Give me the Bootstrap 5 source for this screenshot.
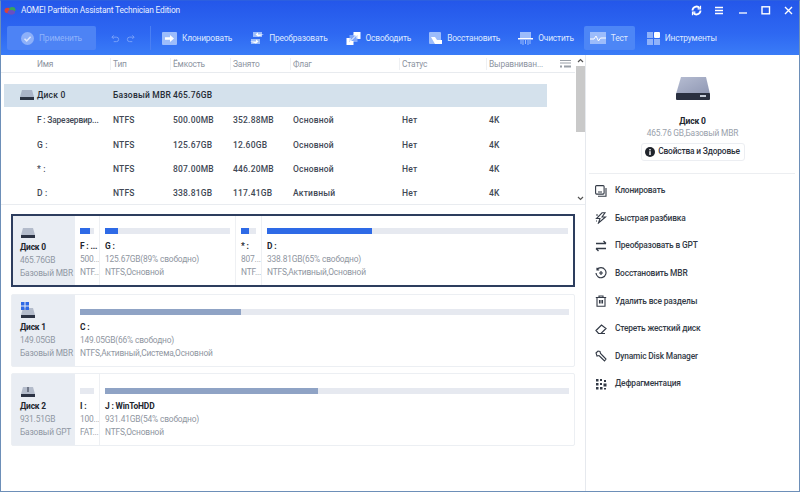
<!DOCTYPE html>
<html lang="ru">
<head>
<meta charset="utf-8">
<title>AOMEI Partition Assistant</title>
<link href="https://cdn.jsdelivr.net/npm/bootstrap@5.3.0/dist/css/bootstrap.min.css" rel="stylesheet">
<style>
html,body{height:100%;overflow:hidden;background:#fff}
body{font-family:Roboto,"Liberation Sans",sans-serif;font-size:8.400px;letter-spacing:-.17px;color:#3c4350}
.win{width:800px;height:492px;border:1px solid #6d8fb8;border-top-color:#2c5fe0;display:flex;flex-direction:column;overflow:hidden}
.hdr{height:54px;flex:none;background:linear-gradient(180deg,#2457ea 0%,#2e68f2 60%,#3a7cf7 100%);color:#fff}
.ttl{height:19px;padding:0 0 0 3px;gap:5px;color:#e9f0ff}
.winbtns{margin-left:auto;gap:12px;padding-right:5px}
.tools{height:24px;margin-top:6px;padding-left:6px;color:#dfe9ff}
.tb{height:24px;gap:5px;margin-right:18px;white-space:nowrap;border-radius:2px}
.apply{width:89px;background:#4d83f5;color:#8fb3fb;justify-content:center;margin-right:15px}
.undo{gap:6px;width:25px;margin-right:14px}
.sep{width:1px;height:24px;background:#4a7ff3;margin-right:11px}
.active-tb{background:#4d86f6;width:51px;padding-left:6px;margin:0 12px 0 -8px}
.bodyrow{flex:1;min-height:0}
.leftp{width:584px;flex:none;display:flex;flex-direction:column}
.rightp{flex:1;border-left:1px solid #e6e9ee;display:flex;flex-direction:column;align-items:center}
.tablewrap{height:150px;flex:none;border-bottom:1px solid #e9ecf0;display:flex}
.tbl{width:574px;flex:none}
.trow{display:grid;grid-template-columns:109px 60px 60px 60px 109px 87px 1fr;align-items:center}
.thd{height:18px;border-bottom:1px solid #e8ebef;color:#8d949f;position:relative}
.thd>span{border-left:1px solid #eef0f3;padding-left:2px;line-height:12px;height:12px;display:block;white-space:nowrap}
.thd>span:first-child{border-left:0;padding-left:36px}
.td{height:24.400px;font-weight:500;color:#414855;font-size:8.500px;letter-spacing:.2px}
.td>span{padding-left:3px;white-space:nowrap}
.td>span:first-child{padding-left:36px}
.tight{font-size:8.400px;letter-spacing:-.17px}
.sel{height:23px;margin:11px 28px 1.500px 3px;background:#d4e1ec;grid-template-columns:106px 60px 60px 60px 109px 87px 1fr;color:#262c36}
.sel>span:first-child{padding-left:33px;position:relative}
.sel svg{position:absolute;left:15px;top:0}
.colicon{position:absolute;left:559px;top:4px}
.sb{width:10px;background:#fff;display:flex;flex-direction:column;align-items:center}
.sb svg{margin:3px 0;flex:none}
.thumb{width:9px;height:66px;background:#c9c9c9}
.disks{flex:1;padding:9px 9px 0 10px;display:flex;flex-direction:column;gap:6.500px}
.dcard{width:564px;display:flex;border:1px solid #eceff3;height:73px;border-radius:2px}
.dcard.cur{border:2px solid #2d3d5e;border-radius:0}
.dinfo{width:63px;flex:none;background:#e9edf3;padding:6px 0 0 8px;color:#9098a3;line-height:13px;white-space:nowrap}
.cur .dinfo{width:62px;padding:5px 0 0 7px}
.dinfo b,.pt b{color:#22262e;font-weight:700;display:block}
.dinfo svg{display:block;margin-bottom:2px}
.pt{border-left:1px solid #eef0f3;padding:14px 2px 0 5px;color:#8f96a1;line-height:13px;white-space:nowrap;min-width:0}
.cur .pt{padding-top:12px}
.pt.nb{border-left:0}
.pbar{height:6px;background:#e6e9f0;margin-bottom:6px;margin-right:3px}
.pfill{height:6px;background:#2e6ae6}
.gr{background:#8fa3c5}
.dskicon{margin-top:21px}
.dname{font-weight:700;color:#22262e;margin-top:14px;font-size:8.500px}
.dsub{color:#9aa1ab;margin-top:-.500px;line-height:13px}
.propbtn{margin-top:2.500px;height:18px;width:104px;border:1px solid #eceef2;border-radius:3px;color:#2b303a;font-weight:500;gap:3px;justify-content:center;background:#fff;white-space:nowrap}
.ops{align-self:stretch;margin:12px 4px 0 3px;border-top:1px solid #eceef1;padding:3px 0 0 6px}
.op{height:27.600px;gap:8px;color:#333a46;font-weight:500;white-space:nowrap}
</style>
</head>
<body>
<div class="win">
 <div class="hdr">
  <div class="ttl d-flex align-items-center">
   <svg width="12" height="10" viewBox="0 0 13 11"><ellipse cx="4" cy="5" rx="3.500" ry="3" fill="#d8433c"/><ellipse cx="9" cy="4" rx="3.500" ry="3" fill="#3aa45a"/><ellipse cx="8" cy="7" rx="4" ry="2.600" fill="#6a4fc0"/></svg>
   <span>AOMEI Partition Assistant Technician Edition</span>
   <div class="winbtns d-flex align-items-center">
    <svg width="11" height="11" viewBox="0 0 11 11" fill="none" stroke="#fff" stroke-width="1.800"><path d="M1.500 5.500a4 4 0 0 1 7-2.600M9.500 5.500a4 4 0 0 1-7 2.600"/><path d="M9.500 .8v3H6.600M1.500 10.200v-3h2.900" stroke-width="1.200"/></svg>
    <svg width="11" height="11" viewBox="0 0 11 11" stroke="#fff" stroke-width="1.300"><path d="M1 2.500h8M1 5.500h8M1 8.500h8"/></svg>
    <svg width="11" height="11" viewBox="0 0 11 11" stroke="#fff" stroke-width="1.300"><path d="M2 8h8"/></svg>
    <svg width="11" height="11" viewBox="0 0 11 11" fill="none" stroke="#fff" stroke-width="1.400"><rect x="2" y="1.800" width="7.500" height="7"/></svg>
    <svg width="11" height="11" viewBox="0 0 11 11" stroke="#fff" stroke-width="1.400"><path d="M2 2l7 7M9 2l-7 7"/></svg>
   </div>
  </div>
  <div class="tools d-flex align-items-center">
   <div class="tb apply d-flex align-items-center">
    <svg width="13" height="13" viewBox="0 0 13 13"><circle cx="6.500" cy="6.500" r="6.500" fill="#8db0f9"/><path d="M3.500 6.700l2.200 2.200 3.900-4.200" fill="none" stroke="#dbe6fd" stroke-width="1.500"/></svg>
    <span>Применить</span>
   </div>
   <div class="undo d-flex align-items-center">
    <svg width="9" height="9" viewBox="0 0 10 9" fill="none" stroke="#7ea4f8"><path d="M3 1L1 3l2 2M1 3h5a2.400 2.400 0 0 1 0 5H3"/></svg>
    <svg width="9" height="9" viewBox="0 0 10 9" fill="none" stroke="#7ea4f8"><path d="M7 1l2 2-2 2M9 3H4a2.400 2.400 0 0 0 0 5h3"/></svg>
   </div>
   <div class="sep"></div>
   <div class="tb d-flex align-items-center">
    <svg width="15" height="13" viewBox="0 0 15 13"><rect width="15" height="13" rx="1" fill="#9cbcfb"/><path d="M3 5.200h5V3l4 3.500L8 10V7.800H3z" fill="#fff"/></svg>
    <span>Клонировать</span>
   </div>
   <div class="tb d-flex align-items-center">
    <svg width="14" height="14" viewBox="0 0 14 14"><path d="M3 1h9v5H3z" fill="#9cbcfb"/><path d="M1 8h9v5H1z" fill="#9cbcfb"/><path d="M14 3.500H8V1.400L5.500 3.500 8 5.600zM0 10.500h6V8.400l2.500 2.100L6 12.600z" fill="#fff"/></svg>
    <span>Преобразовать</span>
   </div>
   <div class="tb d-flex align-items-center">
    <svg width="15" height="13" viewBox="0 0 14 13"><rect x="7" width="7" height="7" fill="#fff"/><rect y="6" width="7" height="7" fill="#fff"/><rect x="3" y="3" width="8" height="7" fill="#7ea6fa"/><path d="M4 9l6-6M7 3h3.500v3.500M3.500 6v3.500H7" fill="none" stroke="#fff"/></svg>
    <span>Освободить</span>
   </div>
   <div class="tb d-flex align-items-center">
    <svg width="13" height="13" viewBox="0 0 13 13"><rect width="12" height="12" rx="1" fill="#9cbcfb"/><path d="M2 5h4l2 3h5v4H6z" fill="#fff"/></svg>
    <span>Восстановить</span>
   </div>
   <div class="tb d-flex align-items-center">
    <svg width="15" height="13" viewBox="0 0 15 13"><rect x="2" width="11" height="6" fill="#9cbcfb"/><rect y="6" width="15" height="1.500" fill="#fff"/><path d="M3 8v4M5 8v5M7.500 8v4M10 8v5M12 8v4" stroke="#9cbcfb"/></svg>
    <span>Очистить</span>
   </div>
   <div class="tb active-tb d-flex align-items-center">
    <svg width="16" height="12" viewBox="0 0 16 12"><rect width="16" height="12" fill="#9cbcfb"/><path d="M0 7h4l2-3 2.500 5L10.500 6H16" fill="none" stroke="#fff"/></svg>
    <span>Тест</span>
   </div>
   <div class="tb d-flex align-items-center">
    <svg width="13" height="13" viewBox="0 0 13 13"><rect width="6" height="6" fill="#8fb2fa"/><rect x="7" width="6" height="6" rx="1" fill="#fff"/><rect y="7" width="6" height="6" fill="#8fb2fa"/><rect x="7" y="7" width="6" height="6" fill="#8fb2fa"/></svg>
    <span>Инструменты</span>
   </div>
  </div>
 </div>
 <div class="bodyrow d-flex">
  <div class="leftp">
   <div class="tablewrap">
    <div class="tbl position-relative">
     <div class="trow thd"><span>Имя</span><span>Тип</span><span>Ёмкость</span><span>Занято</span><span>Флаг</span><span>Статус</span><span>Выравниван...</span></div>
     <svg class="colicon" width="11" height="10" viewBox="0 0 11 10" stroke="#9aa0a8"><path d="M0 1.500h11M0 4h11"/><path d="M0 7.500h2M4 7.500h7" stroke-width="2"/></svg>
     <div class="trow td sel"><span><svg width="16" height="12" viewBox="0 0 16 12"><path d="M3 1h10l2 7H1z" fill="#aab4c8"/><rect x="1" y="8" width="14" height="3" fill="#2c3344"/></svg>Диск 0</span><span>Базовый MBR</span><span>465.76GB</span></div>
     <div class="trow td"><span class="tight">F : Зарезервир...</span><span>NTFS</span><span>500.00MB</span><span>352.88MB</span><span>Основной</span><span>Нет</span><span>4K</span></div>
     <div class="trow td"><span>G :</span><span>NTFS</span><span>125.67GB</span><span>12.60GB</span><span>Основной</span><span>Нет</span><span>4K</span></div>
     <div class="trow td"><span>* :</span><span>NTFS</span><span>807.00MB</span><span>446.20MB</span><span>Основной</span><span>Нет</span><span>4K</span></div>
     <div class="trow td"><span>D :</span><span>NTFS</span><span>338.81GB</span><span>117.41GB</span><span>Активный</span><span>Нет</span><span>4K</span></div>
    </div>
    <div class="sb">
     <svg width="7" height="5" viewBox="0 0 7 5" fill="none" stroke="#555" stroke-width="1.200"><path d="M1 4l2.500-2.500L6 4"/></svg>
     <div class="thumb"></div><div class="flex-grow-1"></div>
     <svg width="7" height="5" viewBox="0 0 7 5" fill="none" stroke="#555" stroke-width="1.200"><path d="M1 1l2.500 2.500L6 1"/></svg>
    </div>
   </div>
   <div class="disks">
    <div class="dcard cur">
     <div class="dinfo"><svg width="16" height="18" viewBox="0 0 16 18"><path d="M3 7h10l2 7H1z" fill="#b4bccb"/><rect x="1" y="14" width="14" height="3" fill="#2c3344"/></svg><b>Диск 0</b>465.76GB<br>Базовый MBR</div>
     <div class="pt nb" style="width:24px"><div class="pbar"><div class="pfill" style="width:70%"></div></div><b>F : ...</b>500...<br>NTF...</div>
     <div class="pt" style="width:136px"><div class="pbar"><div class="pfill" style="width:10%"></div></div><b>G :</b>125.67GB(89% свободно)<br>NTFS,Основной</div>
     <div class="pt" style="width:26px"><div class="pbar"><div class="pfill" style="width:55%"></div></div><b>* :</b>807...<br>NTF...</div>
     <div class="pt flex-grow-1"><div class="pbar"><div class="pfill" style="width:35%"></div></div><b>D :</b>338.81GB(65% свободно)<br>NTFS,Активный,Основной</div>
    </div>
    <div class="dcard">
     <div class="dinfo"><svg width="16" height="18" viewBox="0 0 16 18"><path d="M3 7h10l2 7H1z" fill="#b4bccb"/><rect x="1" y="14" width="14" height="3" fill="#2c3344"/><path d="M1 1h3.500v3.500H1zM5.500 1H9v3.500H5.500zM1 5.500h3.500V9H1zM5.500 5.500H9V9H5.500z" fill="#2e6ae6"/></svg><b>Диск 1</b>149.05GB<br>Базовый MBR</div>
     <div class="pt nb flex-grow-1"><div class="pbar"><div class="pfill gr" style="width:33%"></div></div><b>C :</b>149.05GB(66% свободно)<br>NTFS,Активный,Система,Основной</div>
    </div>
    <div class="dcard">
     <div class="dinfo"><svg width="16" height="18" viewBox="0 0 16 18"><path d="M3 7h10l2 7H1z" fill="#b4bccb"/><rect x="1" y="14" width="14" height="3" fill="#2c3344"/><path d="M8 7v5" stroke="#2c3344"/></svg><b>Диск 2</b>931.51GB<br>Базовый GPT</div>
     <div class="pt nb" style="width:24px"><div class="pbar"></div><b>I :</b>100...<br>FAT...</div>
     <div class="pt flex-grow-1"><div class="pbar"><div class="pfill gr" style="width:46%"></div></div><b>J : WinToHDD</b>931.41GB(54% свободно)<br>NTFS,Основной</div>
    </div>
   </div>
  </div>
  <div class="rightp">
   <svg class="dskicon" width="36" height="25" viewBox="0 0 36 25"><defs><linearGradient id="gd" x1="0" x2="1" y1="0" y2="1"><stop offset="0" stop-color="#b6bdd2"/><stop offset="1" stop-color="#8f97b3"/></linearGradient></defs><path d="M6 1h25l4 17H1z" fill="url(#gd)"/><rect x="1" y="17" width="34" height="7" rx="1" fill="#2a3040"/><rect x="25" y="19" width="6" height="2" fill="#c5cbd8"/></svg>
   <div class="dname">Диск 0</div>
   <div class="dsub">465.76 GB,Базовый MBR</div>
   <div class="propbtn d-flex align-items-center">
    <svg width="10" height="10" viewBox="0 0 10 10"><circle cx="5" cy="5" r="5" fill="#20242c"/><rect x="4.300" y="4.200" width="1.400" height="3.800" fill="#fff"/><rect x="4.300" y="2" width="1.400" height="1.400" fill="#fff"/></svg>
    <span>Свойства и Здоровье</span>
   </div>
   <div class="ops">
    <div class="op d-flex align-items-center"><svg width="12" height="12" viewBox="0 0 12 12" fill="none" stroke="#333a46" stroke-width="1.100"><rect x=".6" y=".6" width="8.500" height="8.500" rx="1"/><path d="M11 3v8.300H3M3 7h4"/></svg><span>Клонировать</span></div>
    <div class="op d-flex align-items-center"><svg width="12" height="12" viewBox="0 0 12 12" fill="none" stroke="#333a46" stroke-width="1.100"><path d="M7 .8L1.500 6.500H5L3.500 11 10.500 5H7L10 .8zM1 3h2M1 9h1"/></svg><span>Быстрая разбивка</span></div>
    <div class="op d-flex align-items-center"><svg width="12" height="12" viewBox="0 0 12 12" fill="none" stroke="#333a46" stroke-width="1.300"><path d="M1 3.500h10M8.500 1L11 3.500M11 8.500H1M3.500 11L1 8.500"/></svg><span>Преобразовать в GPT</span></div>
    <div class="op d-flex align-items-center"><svg width="12" height="12" viewBox="0 0 12 12" fill="none" stroke="#333a46" stroke-width="1.200"><path d="M2 2.700A5 5 0 1 1 1 6M2 .8v2.200h2.200M4 6h4M6 4v4"/></svg><span>Восстановить MBR</span></div>
    <div class="op d-flex align-items-center"><svg width="12" height="12" viewBox="0 0 12 12" fill="none" stroke="#333a46" stroke-width="1.100"><path d="M.8 2.500h10.400M4 2.500V1h4v1.500M2 2.500v8.700h8V2.500M4.500 5v3.500M6 5v3.500M7.500 5v3.500"/></svg><span>Удалить все разделы</span></div>
    <div class="op d-flex align-items-center"><svg width="12" height="12" viewBox="0 0 12 12" fill="none" stroke="#333a46" stroke-width="1.200"><path d="M1 7.500L6.500 2 11 5.500 6 10.500H3.500zM3.500 10.500H10"/></svg><span>Стереть жесткий диск</span></div>
    <div class="op d-flex align-items-center"><svg width="12" height="12" viewBox="0 0 12 12" fill="none" stroke="#333a46" stroke-width="1.100"><path d="M1 3l2-2 2 .5.500 2L8 6l3 3-1.500 2-3-3-2.500-2.500-2 .5z"/></svg><span>Dynamic Disk Manager</span></div>
    <div class="op d-flex align-items-center"><svg width="12" height="12" viewBox="0 0 12 12" fill="#333a46"><rect x="1" y="1" width="2.500" height="2.500"/><rect x="5" y="1" width="2" height="2"/><rect x="9" y="2" width="2" height="2"/><rect x="1" y="5" width="2.500" height="2.500"/><rect x="5" y="5" width="2" height="2"/><rect x="8.500" y="5.500" width="3" height="3"/><rect x="1" y="9" width="2.500" height="2.500"/><rect x="5" y="9" width="2.500" height="2.500"/><rect x="9" y="10" width="2" height="1.500"/></svg><span>Дефрагментация</span></div>
   </div>
  </div>
 </div>
</div>
<script src="https://cdn.jsdelivr.net/npm/bootstrap@5.3.0/dist/js/bootstrap.bundle.min.js"></script>
</body>
</html>
